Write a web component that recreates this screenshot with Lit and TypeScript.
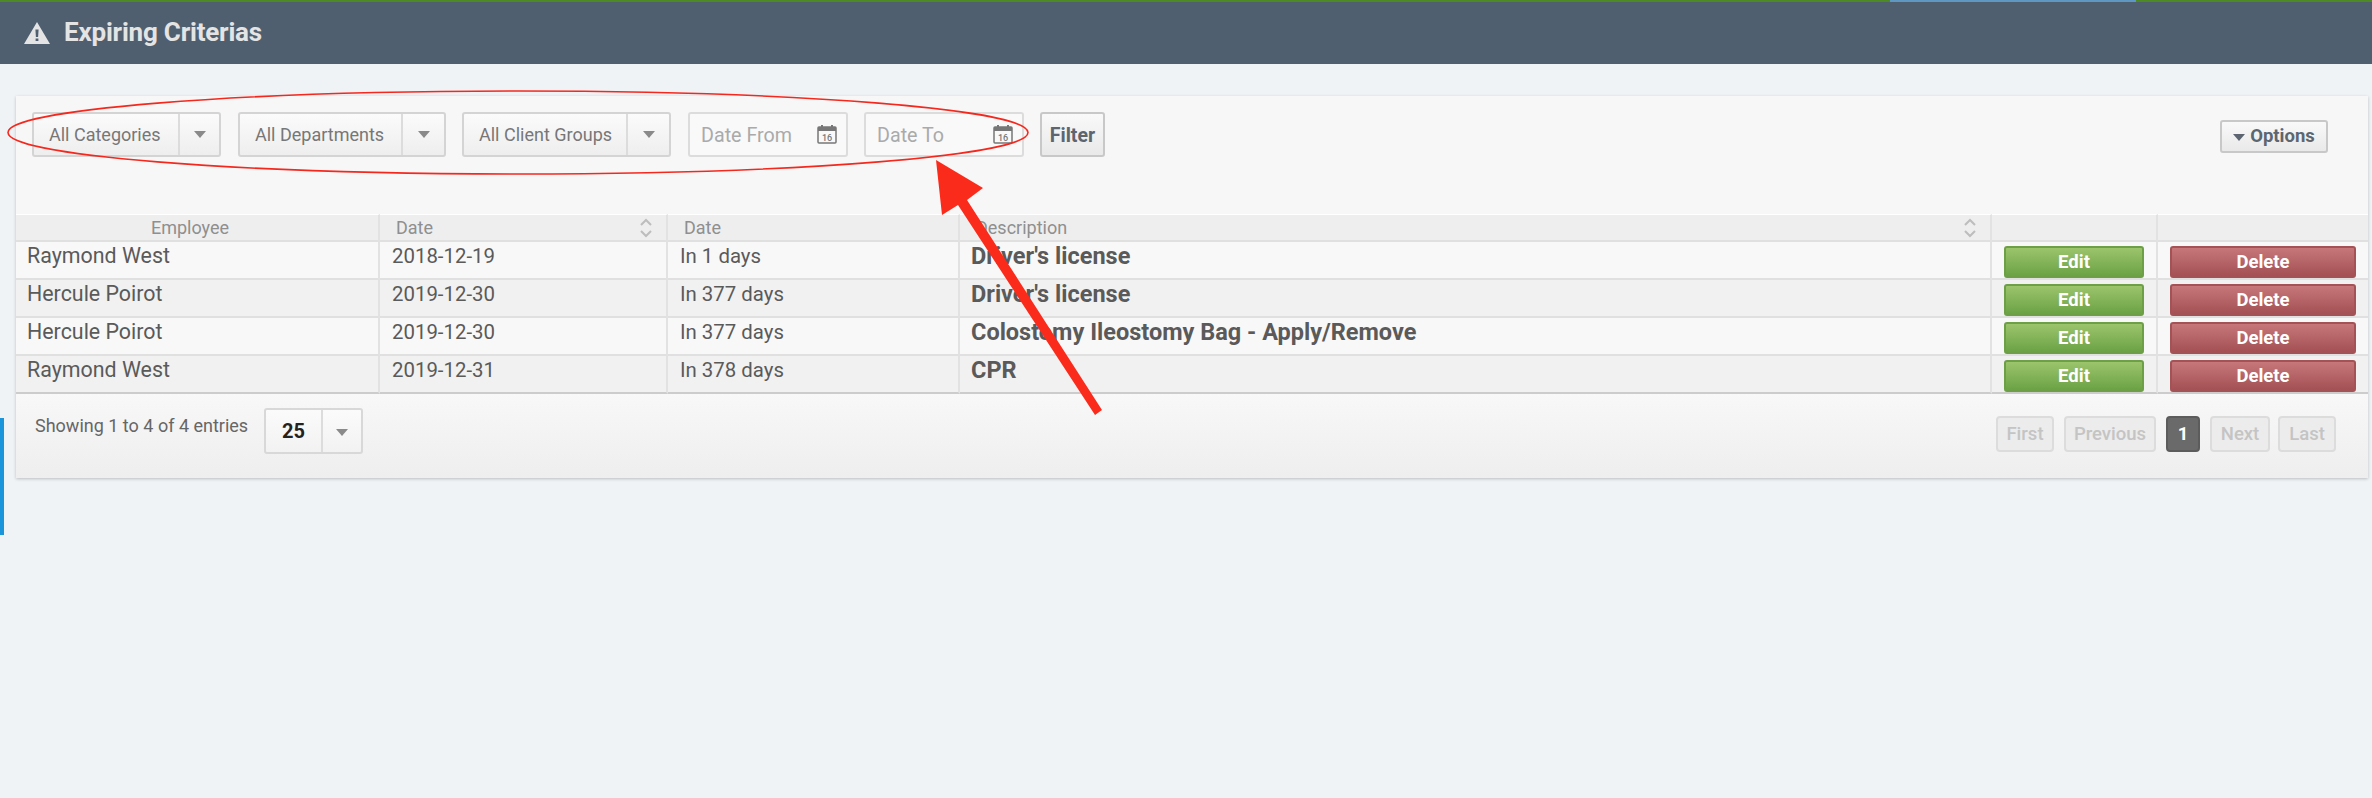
import { LitElement, html, css, svg } from "lit";
import { customElement } from "lit/decorators.js";

const rows = [
  ["Raymond West", "2018-12-19", "In 1 days", "Driver's license"],
  ["Hercule Poirot", "2019-12-30", "In 377 days", "Driver's license"],
  ["Hercule Poirot", "2019-12-30", "In 377 days", "Colostomy Ileostomy Bag - Apply/Remove"],
  ["Raymond West", "2019-12-31", "In 378 days", "CPR"],
];

const sortIcon = html`<svg class="sort" viewBox="0 0 14 20" width="14" height="20" aria-hidden="true">
  <path d="M2 7 L7 2 L12 7 M2 13 L7 18 L12 13" fill="none" stroke="#bdbdbd" stroke-width="2" />
</svg>`;

const calendar = html`<svg class="cal" viewBox="0 0 20 20" width="20" height="20" aria-hidden="true">
  <rect x="1" y="3" width="18" height="16" fill="none" stroke="#777" stroke-width="1.5" rx="1" />
  <rect x="1" y="3" width="18" height="4" fill="#777" />
  <rect x="4" y="1" width="2" height="4" fill="#777" />
  <rect x="14" y="1" width="2" height="4" fill="#777" />
  <text x="10" y="16.5" text-anchor="middle" font-family="Roboto, sans-serif" font-size="9" font-weight="500" fill="#777">16</text>
</svg>`;

@customElement("app-root")
export class AppRoot extends LitElement {
  static styles = css`
    :host {
      display: block;
      position: relative;
      height: 798px;
      overflow: hidden;
      background: #eff3f6;
      font-family: Roboto, "Liberation Sans", sans-serif;
      color: #555;
    }
    .topbar {
      height: 62px;
      background: #4f5f6f;
      border-top: 2px solid #4e8a24;
      display: flex;
      align-items: center;
      gap: 14px;
      padding-left: 24px;
      color: #e4e4e4;
      font-size: 26px;
      font-weight: 700;
      letter-spacing: -0.2px;
    }
    .topbar span { margin-top: -2px; }
    .progress {
      position: absolute;
      left: 1890px;
      top: 0;
      width: 246px;
      height: 2px;
      background: #5e97c2;
    }
    .side {
      position: absolute;
      left: 0;
      top: 418px;
      width: 4px;
      height: 117px;
      background: #1a95dc;
    }
    main {
      padding: 32px 4px 0 16px;
    }
    .panel {
      background: #f7f7f7;
      box-shadow: 0 1px 3px rgba(0, 0, 0, 0.22);
    }
    .filters {
      height: 118px;
      box-sizing: border-box;
      padding: 16px 40px 0 16px;
      display: flex;
      align-items: flex-start;
    }
    .selects {
      display: flex;
      gap: 17px;
      margin-right: 17px;
    }
    .select {
      box-sizing: border-box;
      height: 45px;
      display: flex;
      border: 2px solid #d4d4d4;
      border-radius: 3px;
      background: linear-gradient(#fbfbfb, #eeeeee);
      color: #777;
      font-size: 18px;
    }
    .select .label {
      flex: 1;
      display: flex;
      align-items: center;
      padding-left: 15px;
      padding-bottom: 1px;
      border-right: 2px solid #dcdcdc;
    }
    .select .arrow {
      display: flex;
      align-items: center;
      justify-content: center;
    }
    .caret {
      width: 0;
      height: 0;
      border-left: 6px solid transparent;
      border-right: 6px solid transparent;
      border-top: 7px solid #8a8a8a;
    }
    .s1 { width: 189px; }
    .s1 .arrow { width: 39px; }
    .s2 { width: 208px; }
    .s2 .arrow { width: 41px; }
    .s3 { width: 209px; margin-left: -1px; }
    .s3 .arrow { width: 41px; }
    .date {
      box-sizing: border-box;
      width: 160px;
      height: 45px;
      margin-right: 16px;
      display: flex;
      align-items: center;
      justify-content: space-between;
      padding: 2px 9px 0 11px;
      border: 2px solid #dcdcdc;
      border-radius: 3px;
      background: #f9f9f9;
      color: #aaa;
      font-size: 19.7px;
    }
    .cal { margin-top: -4px; }
    .filter {
      box-sizing: border-box;
      width: 65px;
      height: 45px;
      padding-top: 2px;
      display: flex;
      align-items: center;
      justify-content: center;
      border: 2px solid #c8c8c8;
      border-radius: 3px;
      background: linear-gradient(#f9f9f9, #e9e9e9);
      color: #5d6670;
      font-size: 19.5px;
      font-weight: 700;
    }
    .options {
      box-sizing: border-box;
      margin-left: auto;
      margin-top: 8px;
      width: 108px;
      height: 33px;
      padding-bottom: 2px;
      display: flex;
      align-items: center;
      justify-content: center;
      gap: 5px;
      border: 2px solid #c8c8c8;
      border-radius: 3px;
      background: linear-gradient(#f9f9f9, #e9e9e9);
      color: #5d6670;
      font-size: 18.5px;
      font-weight: 700;
    }
    .options .caret {
      border-top-color: #5d6670;
      margin-top: 3px;
    }
    table {
      width: 100%;
      table-layout: fixed;
      border-collapse: separate;
      border-spacing: 0;
    }
    th {
      box-sizing: content-box;
      height: 25px;
      padding: 0 0 0 12px;
      background: #eeeeee;
      border-top: 1px solid #fff;
      border-right: 2px solid #e2e2e2;
      border-bottom: 2px solid #e0e0e0;
      color: #8f8f8f;
      font-size: 18px;
      font-weight: 400;
      text-align: left;
      vertical-align: middle;
    }
    th:last-child, td:last-child { border-right: none; }
    th.center { text-align: center; padding: 0 14px 0 0; }
    th .cell {
      display: flex;
      justify-content: space-between;
      align-items: center;
      padding-left: 4px;
      padding-right: 13px;
    }
    .sort { display: block; }
    td {
      height: 36px;
      padding: 0;
      border-right: 2px solid #e2e2e2;
      border-bottom: 2px solid #e0e0e0;
      font-size: 20.4px;
      line-height: 28px;
      color: #5a5a5a;
      vertical-align: top;
    }
    td.emp { font-size: 21.4px; }
    tbody tr:nth-child(odd) td { background: #f8f8f8; }
    tbody tr:nth-child(even) td { background: #f1f1f1; }
    tbody tr:last-child td { border-bottom-color: #cccccc; }
    td .txt { padding: 0 12px; }
    td.emp .txt, td.desc .txt { padding: 0 11px; }
    td.desc { font-weight: 700; font-size: 23.5px; }
    .btn {
      box-sizing: border-box;
      height: 32px;
      margin-top: 4px;
      display: flex;
      align-items: center;
      justify-content: center;
      border-radius: 3px;
      color: #fff;
      font-size: 18.5px;
      font-weight: 700;
    }
    .edit {
      margin-left: 12px;
      width: 140px;
      border: 2px solid #6da046;
      background: linear-gradient(#9cc46c, #6ba245);
    }
    .del {
      margin-left: 12px;
      width: 186px;
      border: 2px solid #a55256;
      background: linear-gradient(#c67779, #a45054);
    }
    .footer {
      height: 84px;
      box-sizing: border-box;
      padding: 14px 24px 0 19px;
      display: flex;
      align-items: flex-start;
      background: linear-gradient(#f8f8f8, #eeeeee);
    }
    .info {
      font-size: 18px;
      color: #666;
      width: 230px;
      line-height: 36px;
      margin-top: 0;
    }
    .size {
      box-sizing: border-box;
      width: 99px;
      height: 46px;
      margin-left: -1px;
      display: flex;
      border: 2px solid #d8d8d8;
      border-radius: 3px;
      background: linear-gradient(#fbfbfb, #f2f2f2);
    }
    .size .num {
      width: 55px;
      display: flex;
      align-items: center;
      justify-content: center;
      border-right: 2px solid #dcdcdc;
      font-size: 20px;
      font-weight: 700;
      color: #222;
    }
    .size .arrow {
      flex: 1;
      display: flex;
      align-items: center;
      justify-content: center;
      padding-top: 2px;
    }
    .pager {
      margin-left: auto;
      margin-top: 8px;
      display: flex;
      gap: 10px;
      margin-right: 8px;
    }
    .pg {
      box-sizing: border-box;
      height: 36px;
      display: flex;
      align-items: center;
      justify-content: center;
      border: 2px solid #dcdcdc;
      border-radius: 4px;
      background: #ececec;
      color: #c4c4c4;
      font-size: 18.5px;
      font-weight: 500;
    }
    .pg.last { margin-left: -2px; }
    .pg.cur {
      border-color: #5c5c5c;
      background: #6a6a6a;
      color: #fff;
      font-weight: 700;
    }
    .overlay {
      position: absolute;
      left: 0;
      top: 0;
      pointer-events: none;
    }
  `;

  render() {
    return html`
      <div class="topbar">
        <svg viewBox="0 0 26 22" width="26" height="22" aria-hidden="true">
          <path fill-rule="evenodd" fill="#e4e4e4" d="M13 0 L26 22 H0 Z M11.4 7.5 L11.9 15 H14.1 L14.6 7.5 Z M11.6 16.5 V19 H14.4 V16.5 Z" />
        </svg>
        <span>Expiring Criterias</span>
      </div>
      <div class="progress"></div>
      <div class="side"></div>
      <main>
        <section class="panel">
          <div class="filters">
            <div class="selects">
              <div class="select s1"><div class="label">All Categories</div><div class="arrow"><i class="caret"></i></div></div>
              <div class="select s2"><div class="label">All Departments</div><div class="arrow"><i class="caret"></i></div></div>
              <div class="select s3"><div class="label">All Client Groups</div><div class="arrow"><i class="caret"></i></div></div>
            </div>
            <div class="date"><span>Date From</span>${calendar}</div>
            <div class="date"><span>Date To</span>${calendar}</div>
            <div class="filter">Filter</div>
            <div class="options"><i class="caret"></i><span>Options</span></div>
          </div>
          <table>
            <colgroup>
              <col style="width:364px" /><col style="width:288px" /><col style="width:292px" />
              <col style="width:1032px" /><col style="width:166px" /><col style="width:210px" />
            </colgroup>
            <thead>
              <tr>
                <th class="center">Employee</th>
                <th><div class="cell"><span>Date</span>${sortIcon}</div></th>
                <th><div class="cell"><span>Date</span></div></th>
                <th><div class="cell"><span>Description</span>${sortIcon}</div></th>
                <th></th>
                <th></th>
              </tr>
            </thead>
            <tbody>
              ${rows.map(
                (r) => html`<tr>
                  <td class="emp"><div class="txt">${r[0]}</div></td>
                  <td><div class="txt">${r[1]}</div></td>
                  <td><div class="txt">${r[2]}</div></td>
                  <td class="desc"><div class="txt">${r[3]}</div></td>
                  <td><div class="btn edit">Edit</div></td>
                  <td><div class="btn del">Delete</div></td>
                </tr>`
              )}
            </tbody>
          </table>
          <div class="footer">
            <div class="info">Showing 1 to 4 of 4 entries</div>
            <div class="size"><div class="num">25</div><div class="arrow"><i class="caret"></i></div></div>
            <div class="pager">
              <div class="pg" style="width:58px">First</div>
              <div class="pg" style="width:92px">Previous</div>
              <div class="pg cur" style="width:34px">1</div>
              <div class="pg" style="width:60px">Next</div>
              <div class="pg last" style="width:58px">Last</div>
            </div>
          </div>
        </section>
      </main>
      <svg class="overlay" width="2372" height="798" aria-hidden="true">
        ${svg`<ellipse cx="518" cy="132.5" rx="510" ry="41.5" fill="none" stroke="#f5281e" stroke-width="1.6" />
        <polygon fill="#fb2b1c" points="936,160 983,188 967,200 1102,410 1095,415 958,205 942,215" />`}
      </svg>
    `;
  }
}
